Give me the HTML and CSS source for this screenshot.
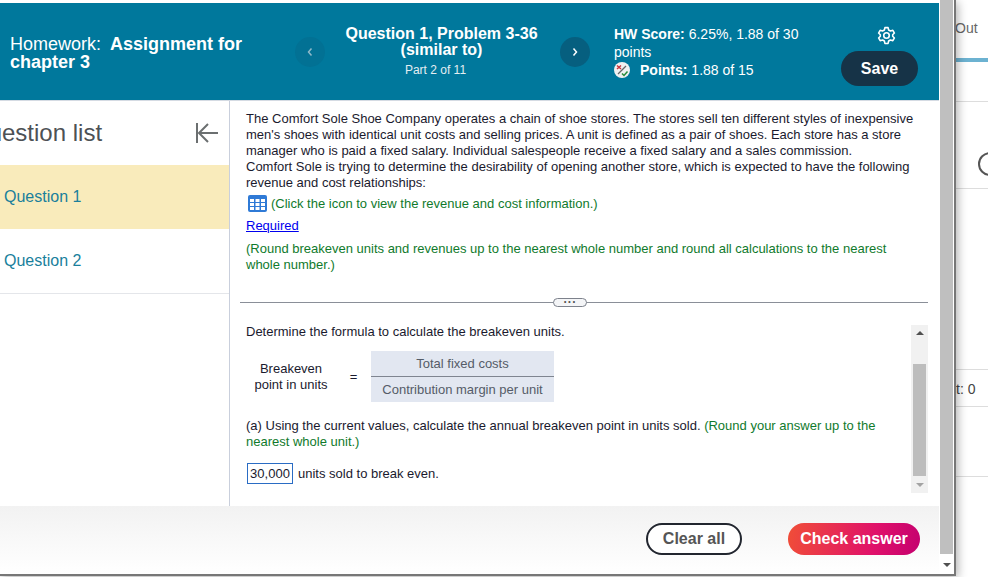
FILE: index.html
```html
<!DOCTYPE html>
<html lang="en">
<head>
    <meta charset="UTF-8">
    <meta name="viewport" content="width=device-width, initial-scale=1.0">
    <title>Homework: Assignment for chapter 3</title>
    <link rel="stylesheet" href="styles.css">
</head>
<body>
    <div class="dialog">
        <div class="main">
            <header class="top-bar">
                <div class="hw-title">Homework: <b class="hw-name">Assignment for chapter 3</b></div>
                <button class="nav-btn nav-prev" type="button">
                    <svg width="8" height="10" viewBox="0 0 8 10"><path d="M5.500 1.500 2.500 5l3 3.500" fill="none" stroke="#8fb9c9" stroke-width="1.500"/></svg>
                </button>
                <div class="q-title">
                    <h2>Question 1, Problem 3-36<br>(similar to)</h2>
                    <p>Part 2 of 11</p>
                </div>
                <button class="nav-btn nav-next" type="button">
                    <svg width="8" height="10" viewBox="0 0 8 10"><path d="M2.500 1.500 5.500 5l-3 3.500" fill="none" stroke="#fff" stroke-width="1.500"/></svg>
                </button>
                <div class="score">
                    <div><b>HW Score:</b> 6.25%, 1.88 of 30 points</div>
                    <div class="points">
                        <svg class="points-icon" width="16" height="16" viewBox="0 0 16 16">
                            <circle cx="8" cy="8" r="8" fill="#f1f1f1"/>
                            <path d="M3 3.500 7 7M7 3.500 3 7" stroke="#c8343c" stroke-width="1.500"/>
                            <path d="M4 12 12 4" stroke="#666" stroke-width="1.200"/>
                            <path d="M8 11.500l2 2 3.500-4" fill="none" stroke="#2a8a3a" stroke-width="1.500"/>
                        </svg>
                        <span><b>Points:</b> 1.88 of 15</span>
                    </div>
                </div>
                <div class="actions">
                    <svg class="gear" width="19" height="19" viewBox="0 0 24 24" fill="none" stroke="#fff" stroke-width="2" stroke-linejoin="round">
                        <circle cx="12" cy="12" r="3.500"/>
                        <path d="M10 2h4l.7 3 2.300 1.300 3-.9 2 3.500-2.200 2.100v2l2.200 2.100-2 3.500-3-.9L14.700 19l-.7 3h-4l-.7-3L7 17.700l-3 .9-2-3.500L4.200 13v-2L2 8.900l2-3.500 3 .9L9.300 5z"/>
                    </svg>
                    <button class="save-btn" type="button">Save</button>
                </div>
            </header>

            <div class="work">
                <aside class="sidebar">
                    <div class="side-head">
                        <h3>Question list</h3>
                        <svg width="24" height="22" viewBox="0 0 24 22" fill="none" stroke="#6b6f70" stroke-width="2">
                            <path d="M2 1v20M23 11H5M13 2l-9 9 9 9"/>
                        </svg>
                    </div>
                    <a class="side-item active">Question 1</a>
                    <a class="side-item">Question 2</a>
                </aside>

                <section class="content">
                    <div class="pane-top">
                        <p>The Comfort Sole Shoe Company operates a chain of shoe stores. The stores sell ten different styles of inexpensive men's shoes with identical unit costs and selling prices. A unit is defined as a pair of shoes. Each store has a store manager who is paid a fixed salary. Individual salespeople receive a fixed salary and a sales commission.<br>Comfort Sole is trying to determine the desirability of opening another store, which is expected to have the following revenue and cost relationships:</p>
                        <p class="hint icon-line">
                            <svg width="19" height="17" viewBox="0 0 19 17">
                                <rect width="19" height="17" rx="2" fill="#2f7ad6"/>
                                <path d="M2 4h4v3H2zM7.500 4h4v3h-4zM13 4h4v3h-4zM2 8h4v3H2zM7.500 8h4v3h-4zM13 8h4v3h-4zM2 12h4v3H2zM7.500 12h4v3h-4zM13 12h4v3h-4z" fill="#fff"/>
                            </svg>
                            (Click the icon to view the revenue and cost information.)
                        </p>
                        <a class="required">Required</a>
                        <p class="hint round-note">(Round breakeven units and revenues up to the nearest whole number and round all calculations to the nearest whole number.)</p>
                    </div>

                    <div class="divider"><span class="grip">...</span></div>

                    <div class="pane-bottom">
                        <div class="pane-text">
                            <p>Determine the formula to calculate the breakeven units.</p>
                            <div class="formula">
                                <div class="formula-label">Breakeven<br>point in units</div>
                                <div class="formula-eq">=</div>
                                <div class="fraction">
                                    <div class="frac-top">Total fixed costs</div>
                                    <div class="frac-bottom">Contribution margin per unit</div>
                                </div>
                            </div>
                            <p class="part-a">(a) Using the current values, calculate the annual breakeven point in units sold. <span class="hint">(Round your answer up to the nearest whole unit.)</span></p>
                            <p class="answer"><span class="answer-box">30,000</span> <span class="answer-text">units sold to break even.</span></p>
                        </div>
                        <div class="pane-scroll">
                            <span class="arrow-up"></span>
                            <span class="pane-track"><span class="pane-thumb"></span></span>
                            <span class="arrow-down"></span>
                        </div>
                    </div>
                </section>
            </div>

            <footer class="bottom-bar">
                <button class="clear-btn" type="button">Clear all</button>
                <button class="check-btn" type="button">Check answer</button>
            </footer>
        </div>
        <div class="page-scroll">
            <span class="page-thumb"></span>
            <span class="page-arrow"></span>
        </div>
    </div>

    <div class="behind">
        <div class="behind-tab">Out</div>
        <div class="behind-help"><span class="help-ring"></span></div>
        <div class="behind-gap"></div>
        <div class="behind-row">t: 0</div>
        <div class="behind-empty"></div>
    </div>
</body>
</html>
```

FILE: styles.css
```css
* {
    box-sizing: border-box;
}
html, body {
    height: 100%;
}
body {
    margin: 0;
    display: flex;
    overflow: hidden;
    font-family: "Liberation Sans", Arial, sans-serif;
    font-size: 12px;
    color: #1a1a2e;
    background: #fff;
}
p, h2, h3 {
    margin: 0;
}
button {
    font-family: inherit;
    cursor: pointer;
}

.dialog {
    flex: 0 0 956px;
    height: 576px;
    display: flex;
    border-right: 2px solid #777;
    border-bottom: 2px solid #777;
    box-shadow: 2px 2px 9px rgba(0, 0, 0, .3);
    position: relative;
    z-index: 1;
    background: #fff;
}
.main {
    flex: 0 0 939px;
    display: flex;
    flex-direction: column;
    padding-top: 3px;
}

.top-bar {
    flex: 0 0 98px;
    display: flex;
    align-items: center;
    background: #00789c;
    border-bottom: 1px solid #d5dbe3;
    color: #fff;
}
.hw-title {
    flex: 0 0 295px;
    padding: 2px 50px 0 10px;
    font-size: 18px;
    line-height: 18px;
}
.hw-name {
    margin-left: 4px;
}
.nav-btn {
    flex: 0 0 30px;
    width: 30px;
    height: 30px;
    padding: 0;
    border: none;
    border-radius: 50%;
    display: flex;
    align-items: center;
    justify-content: center;
}
.nav-prev {
    background: #027194;
}
.nav-next {
    background: #065f7f;
}
.q-title {
    flex: 0 0 235px;
    padding-right: 2px;
    text-align: center;
}
.q-title h2 {
    font-size: 16px;
    line-height: 16px;
}
.q-title p {
    margin-top: 5px;
    padding-right: 12px;
    font-size: 12px;
    color: #e4eef2;
}
.score {
    flex: 0 0 214px;
    margin-left: 24px;
    font-size: 14px;
    line-height: 18px;
}
.points {
    display: flex;
    align-items: center;
    gap: 10px;
}
.actions {
    flex: 0 0 77px;
    margin-left: 13px;
    display: flex;
    flex-direction: column;
    align-items: center;
    gap: 6px;
    padding-top: 9px;
}
.gear {
    margin-left: 13px;
}
.save-btn {
    width: 77px;
    height: 35px;
    border: none;
    border-radius: 18px;
    background: #163347;
    color: #fff;
    font-size: 16px;
    font-weight: bold;
}

.work {
    flex: 1;
    display: flex;
    min-height: 0;
}
.sidebar {
    flex: 0 0 230px;
    border-right: 1px solid #c9cfdc;
    overflow: hidden;
}
.side-head {
    height: 64px;
    display: flex;
    align-items: center;
    justify-content: space-between;
    padding-right: 10px;
}
.side-head h3 {
    margin-left: -30px;
    font-size: 24px;
    font-weight: normal;
    color: #4d5155;
}
.side-item {
    display: flex;
    align-items: center;
    height: 65px;
    padding-left: 4px;
    font-size: 16px;
    color: #1a7f9c;
    border-bottom: 1px solid #e4e6ea;
}
.side-item.active {
    height: 64px;
    background: #f9ebbb;
    border-bottom: none;
}

.content {
    flex: 1;
    min-width: 0;
    display: flex;
    flex-direction: column;
    font-size: 13px;
    line-height: 16px;
    color: #1a1a2e;
}
.pane-top {
    height: 201px;
    padding: 10px 22px 0 16px;
}
.hint {
    color: #107a2c;
}
.icon-line {
    margin-top: 4px;
    display: flex;
    align-items: center;
    gap: 4px;
}
.icon-line svg {
    margin-left: 2px;
}
.required {
    display: block;
    margin-top: 6px;
    color: #0000ee;
    text-decoration: underline;
}
.round-note {
    margin-top: 7px;
}
.divider {
    height: 1px;
    margin: 0 11px 0 10px;
    background: #8a8f98;
    display: flex;
    justify-content: center;
    align-items: center;
    padding-right: 28px;
}
.grip {
    width: 34px;
    height: 9px;
    border: 1px solid #7d828c;
    border-radius: 5px;
    background: #f4f5f7;
    font-size: 12px;
    line-height: 0;
    letter-spacing: 1px;
    font-weight: bold;
    text-align: center;
    color: #555;
}
.pane-bottom {
    flex: 1;
    display: flex;
    padding: 21px 11px 13px 16px;
    min-height: 0;
}
.pane-text {
    flex: 1;
    min-width: 0;
    padding-right: 24px;
}
.formula {
    display: flex;
    align-items: center;
    margin-top: 11px;
    text-align: center;
}
.formula-label {
    flex: 0 0 90px;
}
.formula-eq {
    flex: 0 0 35px;
}
.fraction {
    width: 183px;
    background: #e2e7f1;
    color: #555c68;
}
.frac-top {
    height: 26px;
    padding-top: 5px;
    border-bottom: 1px solid #7f8590;
}
.frac-bottom {
    height: 25px;
    padding-top: 5px;
}
.part-a {
    margin-top: 16px;
}
.answer {
    margin-top: 13px;
    display: flex;
    gap: 5px;
}
.answer-box {
    width: 46px;
    height: 21px;
    margin-left: 1px;
    border: 1px solid #2a6cc4;
    text-align: center;
    line-height: 20px;
}
.answer-text {
    line-height: 22px;
}
.pane-scroll {
    flex: 0 0 17px;
    display: flex;
    flex-direction: column;
    align-items: center;
    margin-top: 1px;
    background: #f1f1f1;
    padding: 6px 0;
}
.arrow-up, .arrow-down, .page-arrow {
    width: 0;
    height: 0;
    border-left: 4px solid transparent;
    border-right: 4px solid transparent;
}
.arrow-up {
    border-bottom: 4px solid #505050;
}
.arrow-down {
    border-top: 4px solid #a3a3a3;
}
.pane-track {
    flex: 1;
    width: 13px;
    padding-top: 29px;
    padding-bottom: 7px;
    display: flex;
}
.pane-thumb {
    flex: 1;
    background: #bdbdbd;
}

.bottom-bar {
    flex: 0 0 68px;
    display: flex;
    align-items: flex-start;
    justify-content: flex-end;
    gap: 46px;
    padding: 17px 19px 0 0;
    background: linear-gradient(#f2f2f2, #fff);
}
.clear-btn, .check-btn {
    height: 32px;
    border-radius: 16px;
    font-size: 16px;
    font-weight: bold;
}
.clear-btn {
    width: 96px;
    background: #fff;
    border: 2px solid #22262f;
    color: #555;
}
.check-btn {
    width: 132px;
    border: none;
    color: #fff;
    background: linear-gradient(100deg, #f04e37, #e0116a 65%, #c4006f);
}

.page-scroll {
    flex: 1;
    display: flex;
    flex-direction: column;
    align-items: center;
    padding: 0 1px;
    background: #fff;
}
.page-thumb {
    width: 13px;
    height: 554px;
    margin-bottom: 9px;
    background: #bfbfbf;
}
.page-arrow {
    border-top: 4px solid #505050;
}

.behind {
    flex: 1;
    background: #fff;
    color: #666;
}
.behind-tab {
    height: 102px;
    padding-top: 20px;
    margin-left: -1px;
    font-size: 14px;
    border-bottom: 1px solid #ddd;
    position: relative;
}
.behind-tab::after {
    content: "";
    position: absolute;
    left: 0;
    right: 0;
    top: 58px;
    height: 4px;
    background: #6cb2d1;
}
.behind-help {
    height: 87px;
    padding-top: 50px;
    border-bottom: 1px solid #ddd;
    overflow: hidden;
}
.help-ring {
    display: block;
    width: 24px;
    height: 24px;
    margin-left: 22px;
    border: 2px solid #555;
    border-radius: 50%;
}
.behind-gap {
    height: 181px;
    border-bottom: 1px solid #ddd;
}
.behind-row {
    height: 37px;
    padding-top: 11px;
    border-bottom: 1px solid #ddd;
    font-size: 14px;
    color: #444;
}
.behind-empty {
    height: 70px;
    border-bottom: 1px solid #ddd;
}
```
